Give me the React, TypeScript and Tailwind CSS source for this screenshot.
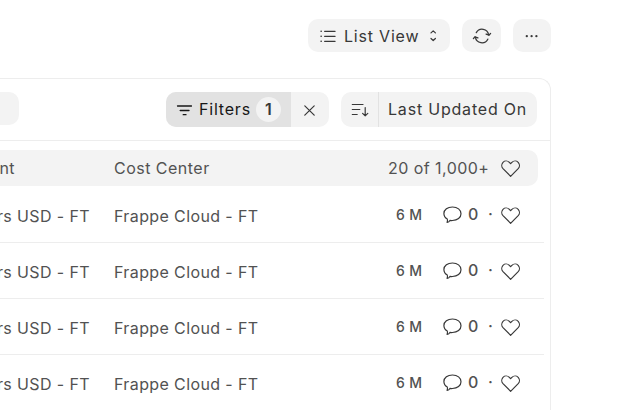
const stroke = {
  fill: 'none',
  stroke: 'currentColor',
  strokeLinecap: 'round' as const,
  strokeLinejoin: 'round' as const,
};

function ListIcon() {
  return (
    <svg className="h-[14px] w-4 shrink-0" viewBox="0 0 16 14" {...stroke} strokeWidth="1.2">
      <path d="M4.6 2.3H15.1M4.6 7.3H15.1M4.6 12.3H15.1" />
      <path d="M1.1 2.3h.1M1.1 7.3h.1M1.1 12.3h.1" strokeWidth="1.6" />
    </svg>
  );
}

function SelectIcon() {
  return (
    <svg className="h-3 w-2 shrink-0" viewBox="0 0 8 12" {...stroke} strokeWidth="1.25">
      <path d="M2 2.9 4.2 .9 6.4 2.9M2 8.5 4.2 10.5 6.4 8.5" />
    </svg>
  );
}

function RefreshIcon() {
  return (
    <svg className="h-[18px] w-5" viewBox="0 0 20 18" {...stroke} strokeWidth="1.3">
      <path d="M4.3 5.6A6.6 6.6 0 0 1 16.6 7.8" />
      <path d="M15.8 12.2A6.6 6.6 0 0 1 3.4 10.2" />
      <path d="M14.1 7.1 17 8.2 18.6 6.4M1.4 11.6 3 9.8 5.9 10.9" />
    </svg>
  );
}

function FilterIcon() {
  return (
    <svg className="h-3 w-[17px] shrink-0" viewBox="0 0 17 12" {...stroke} strokeWidth="1.3">
      <path d="M1.5 2H15.5M4.2 6.5H13M7.2 10.7H10" />
    </svg>
  );
}

function SortIcon() {
  return (
    <svg className="h-[14px] w-[18px]" viewBox="0 0 18 14" {...stroke} strokeWidth="1.2">
      <path d="M1.3 1.5H12M1.3 6.5H8.8M1.3 11.5H6.2M14.2 4.6V12.8M11.6 10.4 14.2 12.9 16.8 10.4" />
    </svg>
  );
}

function HeartIcon() {
  return (
    <svg className="h-[18px] w-5 shrink-0 text-[#383838]" viewBox="0 0 20 18" {...stroke} strokeWidth="1.2">
      <path d="M9.6 17.3 2 9.7C.4 8 .4 5.1 2 3.3 3.8 1.5 6.6 1.6 8.3 3.3L9.6 4.7 10.9 3.3C12.6 1.6 15.4 1.5 17.2 3.3 18.8 5.1 18.8 8 17.2 9.7Z" />
    </svg>
  );
}

function CommentIcon() {
  return (
    <svg className="h-[18px] w-5 shrink-0 text-[#383838]" viewBox="0 0 20 18" {...stroke} strokeWidth="1.2">
      <path d="M10.5 1C5.6 1 1.9 3.7 1.9 7.5c0 2.4 1.2 4.3 3.4 5.6.3.8.2 2.2-.2 3.3 1.3-.2 2.2-.8 2.8-2 .9.2 1.7.2 2.6.1 4.9 0 8.5-2.9 8.5-6.8S15.4 1 10.5 1Z" />
    </svg>
  );
}

function Row() {
  return (
    <div className="flex h-14 w-[544px] items-center border-b border-[#ededed] text-[#525252]">
      <div className="flex w-[90px] shrink-0 justify-end pt-[2px] whitespace-nowrap">rs USD - FT</div>
      <div className="ml-6 w-[282px] shrink-0 pt-[2px] whitespace-nowrap">Frappe Cloud - FT</div>
      <div className="w-[46px] shrink-0 text-[14px] font-medium whitespace-nowrap">6 M</div>
      <CommentIcon />
      <span className="-mt-[2px] ml-[6px] w-[20px] font-medium">0</span>
      <span className="-mt-[2px] w-[13px] font-medium">·</span>
      <HeartIcon />
    </div>
  );
}

export default function App() {
  return (
    <div className="h-[410px] w-[624px] overflow-hidden bg-white font-['Inter',sans-serif] text-[16px] leading-6 tracking-[0.024em] text-[#383838]">
      <header className="flex h-[78px] w-[551px] justify-end gap-3 pt-[19px]">
        <button className="flex h-[33px] w-[142px] items-center rounded-[10px] bg-[#f3f3f3] pl-3">
          <ListIcon />
          <span className="ml-2 w-[85px] text-left tracking-[0.05em] whitespace-nowrap">List View</span>
          <SelectIcon />
        </button>
        <button className="flex h-[33px] w-[39px] items-center justify-center rounded-[10px] bg-[#f3f3f3]">
          <RefreshIcon />
        </button>
        <button className="flex h-[33px] w-[38px] items-center justify-center rounded-[10px] bg-[#f3f3f3]">
          <svg className="h-1 w-4" viewBox="0 0 16 4" fill="currentColor">
            <circle cx="2.8" cy="2.2" r="1.15" />
            <circle cx="7.6" cy="2.2" r="1.15" />
            <circle cx="12.4" cy="2.2" r="1.15" />
          </svg>
        </button>
      </header>
      <main className="h-[340px] w-[551px] rounded-tr-[12px] border-t border-r border-[#ededed]">
        <div className="flex h-[62px] border-b border-[#ededed] pt-[13px]">
          <div className="h-[33px] w-[19px] rounded-r-[10px] bg-[#f3f3f3]" />
          <div className="ml-[147px] flex h-[35px] w-[163px] overflow-hidden rounded-[10px] bg-[#f3f3f3]">
            <button className="flex w-[125px] items-center bg-[#e2e2e2] pl-[10px] text-[#171717]">
              <FilterIcon />
              <span className="-mt-[2px] ml-[6px] w-[57px] text-left tracking-[0.05em]">Filters</span>
              <span className="flex size-[25px] items-center justify-center rounded-full bg-[#f3f3f3] pb-px font-semibold text-[#383838]">1</span>
            </button>
            <button className="flex w-[38px] items-center justify-center">
              <svg className="size-3" viewBox="0 0 12 12" {...stroke} strokeWidth="1.2">
                <path d="M.8 1.8 10.2 11.2M10.2 1.8 .8 11.2" />
              </svg>
            </button>
          </div>
          <div className="ml-3 flex h-[35px] w-[196px] overflow-hidden rounded-[10px] bg-[#f3f3f3]">
            <button className="flex w-[38px] items-center justify-center border-r border-[#e2e2e2]">
              <SortIcon />
            </button>
            <button className="pb-[2px] pl-[9px] tracking-[0.05em] whitespace-nowrap">Last Updated On</button>
          </div>
        </div>
        <div className="mt-[9px] flex h-9 w-[538px] items-center rounded-r-[10px] bg-[#f3f3f3] text-[#525252]">
          <div className="flex w-[15px] shrink-0 justify-end whitespace-nowrap">nt</div>
          <div className="ml-[99px] w-[274px] shrink-0 tracking-[0.03em]">Cost Center</div>
          <div className="w-[113px] shrink-0 tracking-[0.028em] whitespace-nowrap">20 of 1,000+</div>
          <HeartIcon />
        </div>
        <div className="pt-px">
          <Row />
          <Row />
          <Row />
          <Row />
        </div>
      </main>
    </div>
  );
}
